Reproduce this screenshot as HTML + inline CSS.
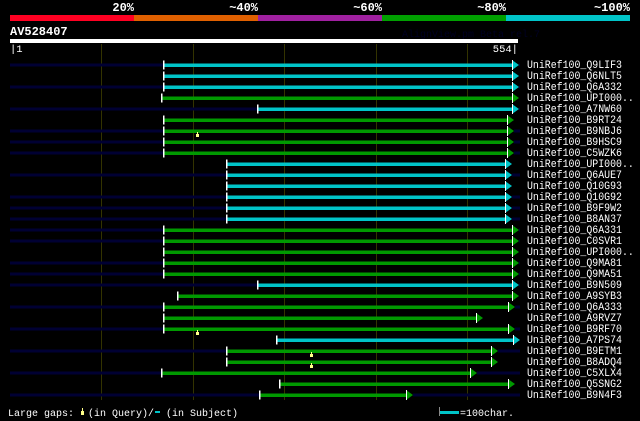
<!DOCTYPE html><html><head><style>
body{margin:0;background:#000;width:640px;height:421px;overflow:hidden;font-family:"Liberation Mono","DejaVu Sans Mono",monospace;}
svg{position:absolute;left:0;top:0}
text{font-family:"Liberation Mono","DejaVu Sans Mono",monospace;}
</style></head><body>
<svg width="640" height="421" xmlns="http://www.w3.org/2000/svg">
<rect x="10" y="15" width="124" height="6" fill="#ff0022"/>
<rect x="134" y="15" width="124" height="6" fill="#e06000"/>
<rect x="258" y="15" width="124" height="6" fill="#a020a0"/>
<rect x="382" y="15" width="124" height="6" fill="#00a000"/>
<rect x="506" y="15" width="124" height="6" fill="#00c4c8"/>
<g fill="#fff" font-size="12" font-weight="bold" text-anchor="end">
<text x="134" y="11">20%</text><text x="258" y="11">~40%</text><text x="382" y="11">~60%</text><text x="506" y="11">~80%</text><text x="630" y="11">~100%</text></g>
<text x="10" y="35" fill="#fff" font-size="12" font-weight="bold">AV528407</text>
<text x="402" y="37" fill="#000022" font-size="10">AlignView.pm Beta rel.7</text>
<rect x="10" y="39" width="508" height="4" fill="#fff"/>
<text x="10" y="52" fill="#fff" font-size="10.5">|1</text>
<text x="518" y="52" fill="#fff" font-size="10.5" text-anchor="end">554|</text>
<g fill="#333300"><rect x="101" y="44" width="1" height="356"/><rect x="193" y="44" width="1" height="356"/><rect x="284" y="44" width="1" height="356"/><rect x="376" y="44" width="1" height="356"/><rect x="467" y="44" width="1" height="356"/></g>
<g id="rows"></g>
<g fill="#fff" font-size="11" transform="matrix(0.9,0,0,1,52.7,0)">
<text x="527" y="68">UniRef100_Q9LIF3</text><text x="527" y="79">UniRef100_Q6NLT5</text><text x="527" y="90">UniRef100_Q6A332</text><text x="527" y="101">UniRef100_UPI000..</text><text x="527" y="112">UniRef100_A7NW60</text><text x="527" y="123">UniRef100_B9RT24</text><text x="527" y="134">UniRef100_B9NBJ6</text><text x="527" y="145">UniRef100_B9HSC9</text><text x="527" y="156">UniRef100_C5WZK6</text><text x="527" y="167">UniRef100_UPI000..</text><text x="527" y="178">UniRef100_Q6AUE7</text><text x="527" y="189">UniRef100_Q10G93</text><text x="527" y="200">UniRef100_Q10G92</text><text x="527" y="211">UniRef100_B9F9W2</text><text x="527" y="222">UniRef100_B8AN37</text><text x="527" y="233">UniRef100_Q6A331</text><text x="527" y="244">UniRef100_C0SVR1</text><text x="527" y="255">UniRef100_UPI000..</text><text x="527" y="266">UniRef100_Q9MA81</text><text x="527" y="277">UniRef100_Q9MA51</text><text x="527" y="288">UniRef100_B9N509</text><text x="527" y="299">UniRef100_A9SYB3</text><text x="527" y="310">UniRef100_Q6A333</text><text x="527" y="321">UniRef100_A9RVZ7</text><text x="527" y="332">UniRef100_B9RF70</text><text x="527" y="343">UniRef100_A7PS74</text><text x="527" y="354">UniRef100_B9ETM1</text><text x="527" y="365">UniRef100_B8ADQ4</text><text x="527" y="376">UniRef100_C5XLX4</text><text x="527" y="387">UniRef100_Q5SNG2</text><text x="527" y="398">UniRef100_B9N4F3</text>
</g>
<g fill="#fff" font-size="10">
<text x="8" y="416">Large gaps:</text><text x="88" y="416">(in Query)/</text><text x="166" y="416">(in Subject)</text><text x="460" y="416">=100char.</text>
</g>
<rect x="81" y="411" width="3" height="4" fill="#ffff88"/><rect x="82" y="408" width="1" height="3" fill="#ffff88"/>
<rect x="155" y="411" width="5" height="2" fill="#00c4c8"/>
<rect x="440" y="411" width="19" height="3" fill="#00c4c8"/>
<rect x="439" y="407" width="1" height="9" fill="#888"/>
</svg>
<script>
var G='#009900',C='#00c4c8';
var R=[[1,164,512,C],[0,164,512,C],[1,164,512,C],[0,162,512,G],[1,258,512,C],[0,164,507,G],[1,164,507,G,197],[1,164,507,G],[1,164,507,G],[0,227,505,C],[1,227,505,C],[0,227,505,C],[1,227,505,C],[1,227,505,C],[1,227,505,C],[1,164,512,G],[1,164,512,G],[0,164,512,G],[1,164,512,G],[1,164,512,G],[1,258,512,C],[0,178,512,G],[1,164,508,G],[0,164,476,G],[1,164,508,G,197],[0,277,513,C],[1,227,491,G,311],[0,227,491,G,311],[1,162,470,G],[0,280,508,G],[1,260,406,G]];
var s='';R.forEach(function(r,i){var y=65+11*i;
if(r[0]){s+='<rect x="10" y="'+(y-1.5)+'" width="'+(r[1]-10)+'" height="3" fill="#000033"/>';s+='<rect x="'+(r[2]+7)+'" y="'+(y-1.5)+'" width="'+(520-r[2]-7)+'" height="3" fill="#000033"/>';}
s+='<rect x="'+r[1]+'" y="'+(y-1.5)+'" width="'+(r[2]-r[1])+'" height="3.5" fill="'+r[3]+'"/>';
s+='<polygon points="'+r[2]+','+(y-5)+' '+(r[2]+7)+','+y+' '+r[2]+','+(y+5)+'" fill="'+r[3]+'"/>';
s+='<rect x="'+(r[2])+'" y="'+(y-5)+'" width="1" height="10" fill="#fff"/>';
s+='<rect x="'+(r[1]-1)+'" y="'+(y-4.5)+'" width="1.5" height="9" fill="#fff"/>';
if(r[4])s+='<rect x="'+(r[4]-1)+'" y="'+(y+3)+'" width="3" height="3" fill="#ffff88"/><rect x="'+r[4]+'" y="'+(y+1)+'" width="1" height="2" fill="#ffff88"/>';});
document.getElementById('rows').innerHTML=s;
</script>
</body></html>
